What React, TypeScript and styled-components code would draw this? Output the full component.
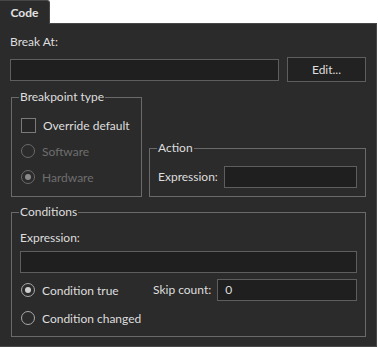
import React from "react";
import styled, { createGlobalStyle } from "styled-components";

const GlobalStyle = createGlobalStyle`
  html, body {
    margin: 0;
    padding: 0;
    background: #ffffff;
  }
  body {
    font-family: "Lato", "Noto Sans", sans-serif;
    font-size: 12px;
  }
`;

const Window = styled.div`
  width: 378px;
  height: 348px;
  display: flex;
  flex-direction: column;
`;

const TabStrip = styled.div`
  display: flex;
  height: 23px;
`;

const Tab = styled.div`
  width: 50px;
  height: 24px;
  box-sizing: border-box;
  background: #2b2b2b;
  border: 1px solid #474747;
  border-bottom: none;
  border-left: none;
  border-top-right-radius: 3px;
  color: #e2e2e2;
  font-weight: 700;
  display: flex;
  align-items: center;
  justify-content: center;
  padding-bottom: 1px;
  position: relative;
  z-index: 1;
`;

const Panel = styled.div`
  width: 377px;
  height: 324px;
  box-sizing: border-box;
  background: #2b2b2b;
  border: 1px solid #474747;
  border-left: none;
  padding: 10px 10px 0 10px;
  display: flex;
  flex-direction: column;
  color: #dedede;
`;

const Label = styled.div`
  line-height: 16px;
  height: 16px;
  white-space: nowrap;
`;

const InputRow = styled.div`
  display: flex;
  align-items: center;
  gap: 8px;
  margin-top: 7px;
  height: 25px;
`;

const TextBox = styled.div<{ $width?: number }>`
  ${(p) => (p.$width ? `width: ${p.$width}px;` : "flex: 1 0 auto;")}
  height: 22px;
  box-sizing: border-box;
  background: #1f1f1f;
  border: 1px solid #5e5e5e;
  color: #dedede;
  padding: 0 7px;
  line-height: 20px;
`;

const Button = styled.div`
  width: 79px;
  height: 25px;
  box-sizing: border-box;
  background: #222222;
  border: 1px solid #5e5e5e;
  color: #dedede;
  display: flex;
  align-items: center;
  justify-content: center;
  padding-bottom: 1px;
`;

const GroupRow = styled.div`
  display: flex;
  align-items: flex-end;
  gap: 7px;
  margin: 7px 0 0 1px;
`;

const Group = styled.fieldset<{ $width?: number }>`
  margin: 0;
  ${(p) => (p.$width ? `width: ${p.$width}px;` : "flex: 1;")}
  box-sizing: border-box;
  min-width: 0;
  border: 1px solid #6a6a6a;
  padding: 0 8px;
  display: flex;
  flex-direction: column;
`;

const Legend = styled.legend`
  padding: 0 1px 0 1px;
  margin-left: -1px;
  line-height: 16px;
  color: #dedede;
`;

const OptionRow = styled.div<{ $disabled?: boolean }>`
  display: flex;
  align-items: center;
  height: 26px;
  gap: 7px;
  color: ${(p) => (p.$disabled ? "#6e6e6e" : "#dedede")};
  white-space: nowrap;
`;

const CheckBox = styled.span`
  width: 15px;
  height: 15px;
  box-sizing: border-box;
  border: 1px solid #7a7a7a;
  background: #262626;
  margin-left: 1px;
`;

const Radio = styled.span<{ $checked?: boolean; $disabled?: boolean }>`
  width: 14px;
  height: 14px;
  box-sizing: border-box;
  border-radius: 50%;
  border: 1px solid ${(p) => (p.$disabled ? "#6a6a6a" : "#a8a8a8")};
  margin-left: 1px;
  display: flex;
  align-items: center;
  justify-content: center;

  &::after {
    content: "";
    display: ${(p) => (p.$checked ? "block" : "none")};
    width: 6px;
    height: 6px;
    border-radius: 50%;
    background: ${(p) => (p.$disabled ? "#8a8a8a" : "#d0d0d0")};
  }
`;

const FieldLine = styled.div`
  display: flex;
  align-items: center;
  gap: 6px;
`;

const ConditionChoice = styled.div`
  width: 127px;
  flex-shrink: 0;
`;

const Spacer = styled.div<{ $h: number }>`
  height: ${(p) => p.$h}px;
  flex-shrink: 0;
`;

export default function App() {
  return (
    <>
      <GlobalStyle />
      <Window>
        <TabStrip>
          <Tab>Code</Tab>
        </TabStrip>
        <Panel>
          <Label>Break At:</Label>
          <InputRow>
            <TextBox $width={269} />
            <Button>Edit...</Button>
          </InputRow>

          <GroupRow>
            <Group $width={131} style={{ paddingBottom: 6 }}>
              <Legend>Breakpoint type</Legend>
              <Spacer $h={7} />
              <OptionRow>
                <CheckBox />
                Override default
              </OptionRow>
              <OptionRow $disabled>
                <Radio $disabled />
                Software
              </OptionRow>
              <OptionRow $disabled>
                <Radio $disabled $checked />
                Hardware
              </OptionRow>
            </Group>

            <Group style={{ paddingTop: 10, paddingBottom: 8 }}>
              <Legend>Action</Legend>
              <FieldLine>
                <Label>Expression:</Label>
                <TextBox />
              </FieldLine>
            </Group>
          </GroupRow>

          <GroupRow>
            <Group style={{ paddingTop: 10, paddingBottom: 5 }}>
              <Legend>Conditions</Legend>
              <Label>Expression:</Label>
              <Spacer $h={5} />
              <TextBox />
              <Spacer $h={4} />
              <FieldLine>
                <ConditionChoice>
                  <OptionRow>
                    <Radio $checked />
                    Condition true
                  </OptionRow>
                </ConditionChoice>
                <Label>Skip count:</Label>
                <TextBox>0</TextBox>
              </FieldLine>
              <Spacer $h={2} />
              <OptionRow>
                <Radio />
                Condition changed
              </OptionRow>
            </Group>
          </GroupRow>
        </Panel>
      </Window>
    </>
  );
}
